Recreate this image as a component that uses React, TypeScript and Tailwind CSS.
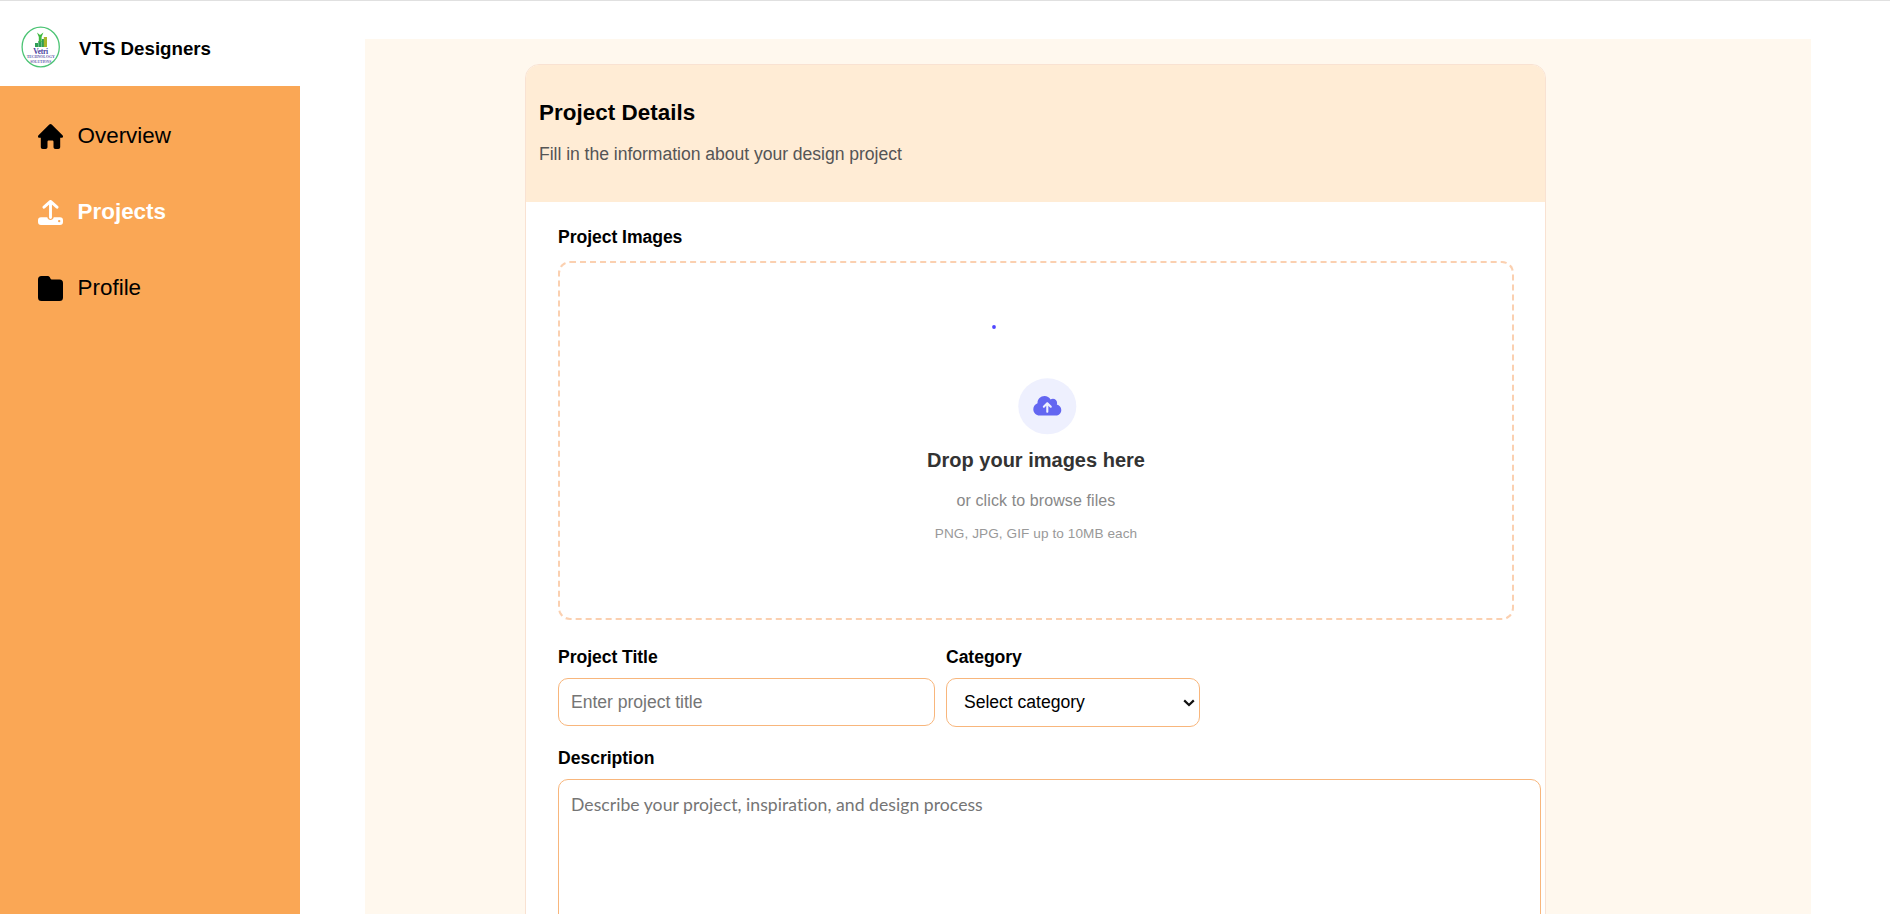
import React from "react";

const font = "font-['Liberation_Sans',Arial,sans-serif]";

function Logo() {
  return (
    <svg width="40" height="42" viewBox="0 0 40 42" className="shrink-0">
      <ellipse cx="19.7" cy="21" rx="18.600" ry="19.800" fill="#fff" stroke="#4cc474" strokeWidth="1.300" />
      <path d="M14 17h3v4h-3zM17.300 15h3.200v6h-3.200zM20.800 13h2.200v8h-2.200z" fill="#2f9e56" />
      <path d="M22.800 11h3.200v10h-3.200z" fill="#a8b52a" />
      <path d="M16 6.500l3 2.600 3.400-2.600-1.800 4.500v5h-2.800v-5z" fill="#3fb83f" />
      <text x="19.700" y="28" textAnchor="middle" fontSize="7.500" textLength="15" fontWeight="700" fontFamily="Liberation Serif, serif" fill="#4a3fa0">Vetri</text>
      <text x="19.700" y="32.300" textAnchor="middle" fontSize="4.500" textLength="28" lengthAdjust="spacingAndGlyphs" fontWeight="700" fontFamily="Liberation Serif, serif" fill="#6257a8">TECHNOLOGY</text>
      <text x="19.700" y="37" textAnchor="middle" fontSize="4.500" textLength="21" lengthAdjust="spacingAndGlyphs" fontWeight="700" fontFamily="Liberation Serif, serif" fill="#6257a8">SOLUTIONS</text>
    </svg>
  );
}

function HomeIcon() {
  return (
    <svg width="25" height="25" viewBox="0 0 25 25" fill="currentColor">
      <path d="M11.300.600a1.700 1.700 0 0 1 2.400 0L24.500 11.300c1 1 .5 2.500-.9 2.500H22.200V23c0 1.300-.7 2-2 2h-2.700c-1.300 0-2-.7-2-2v-5c0-.9-.5-1.400-1.400-1.400h-3.200c-.9 0-1.400.5-1.400 1.400V23c0 1.300-.7 2-2 2H4.800c-1.300 0-2-.7-2-2v-9.200H1.400c-1.400 0-1.900-1.500-.9-2.500z" />
    </svg>
  );
}

function UploadIcon() {
  return (
    <svg width="25" height="25" viewBox="0 0 25 25" fill="currentColor">
      <path d="M6 7.200l6.500-5.800L19 7.200M12.500 2.200v15.300" fill="none" stroke="currentColor" strokeWidth="2.900" strokeLinecap="round" strokeLinejoin="round" />
      <path fillRule="evenodd" d="M3 17.200h6.300c.4 1.700 1.600 2.800 3.200 2.800s2.800-1.100 3.200-2.800H22a3 3 0 0 1 3 3V22a3 3 0 0 1-3 3H3a3 3 0 0 1-3-3v-1.800a3 3 0 0 1 3-3zM21.200 19.900a1.200 1.200 0 1 0 0 2.400 1.200 1.200 0 0 0 0-2.400z" />
    </svg>
  );
}

function FolderIcon() {
  return (
    <svg width="25" height="25" viewBox="0 0 25 25" fill="currentColor">
      <path d="M3.500 0h5.800c1.400 0 2.300.6 2.900 1.900.5 1.100 1 1.500 2.200 1.500h7.100A3.500 3.500 0 0 1 25 6.900v14.600a3.500 3.500 0 0 1-3.500 3.500h-18A3.500 3.500 0 0 1 0 21.500v-18A3.500 3.500 0 0 1 3.500 0z" />
    </svg>
  );
}

function CloudPicture() {
  return (
    <svg width="104" height="120" viewBox="0 0 104 120">
      <circle cx="10" cy="7" r="1.900" fill="#4f46ff" />
      <ellipse cx="63.300" cy="86.300" rx="29" ry="28" fill="#eef0fe" />
      <path
        transform="translate(49.3 74.5) scale(0.04375)"
        fill="#6366f1"
        d="M144 480C64.500 480 0 415.500 0 336c0-62.800 40.200-116.200 96.200-135.900c-.1-2.700-.2-5.400-.2-8.100c0-88.400 71.600-160 160-160c59.300 0 111 32.200 138.700 80.200C409.900 102 428.300 96 448 96c53 0 96 43 96 96c0 12.200-2.300 23.800-6.400 34.600C596 238.400 640 290.100 640 352c0 70.700-57.300 128-128 128H144zm79-217c-9.400 9.400-9.400 24.600 0 33.900s24.600 9.400 33.900 0l39-39V392c0 13.300 10.700 24 24 24s24-10.700 24-24V257.900l39 39c9.400 9.400 24.600 9.400 33.900 0s9.400-24.600 0-33.900l-80-80c-9.400-9.400-24.600-9.400-33.900 0l-80 80z"
      />
    </svg>
  );
}

const navItems = [
  { label: "Overview", icon: <HomeIcon />, active: false },
  { label: "Projects", icon: <UploadIcon />, active: true },
  { label: "Profile", icon: <FolderIcon />, active: false },
];

function Sidebar() {
  return (
    <aside className="flex w-[300px] shrink-0 flex-col">
      <div className="flex h-[85px] items-center gap-[18px] pt-[7px] pl-[21px]">
        <Logo />
        <h3 className="pt-[4px] text-[18.72px] font-bold text-black">VTS Designers</h3>
      </div>
      <nav className="flex grow flex-col gap-[51px] bg-[#faa755] pt-[38px] pl-[38px]">
        {navItems.map((item) => (
          <a
            key={item.label}
            className={
              item.active
                ? "flex h-[25px] items-center gap-[14.6px] text-[22.4px] font-bold text-white"
                : "flex h-[25px] items-center gap-[14.6px] text-[22.4px] text-black"
            }
          >
            {item.icon}
            <span className="pb-[2px]">{item.label}</span>
          </a>
        ))}
      </nav>
    </aside>
  );
}

export default function App() {
  return (
    <div className={`flex h-[914px] w-[1890px] overflow-hidden border-t border-[#e0e0e0] bg-white ${font}`}>
      <Sidebar />
      <main className="mt-[38px] ml-[65px] w-[1446px] overflow-hidden bg-[#fff8ee] pt-[25px] pl-[160px]">
        <section className="h-[1100px] w-[1021px] overflow-hidden rounded-[14px] border border-[#f9e2d2] bg-white">
          <header className="h-[137px] bg-[#ffecd5] pt-[34px] pl-[13px]">
            <h2 className="text-[22.4px] leading-[28px] font-bold tracking-[0.04px] text-black">Project Details</h2>
            <p className="mt-[16px] text-[17.6px] leading-[22px] tracking-[-0.04px] text-[#555]">Fill in the information about your design project</p>
          </header>
          <div className="flex flex-col pt-[24px] pl-[32px]">
            <label className="text-[17.6px] leading-[22px] font-bold tracking-[-0.06px] text-black">Project Images</label>
            <div className="mt-[13px] flex h-[359px] w-[956px] flex-col items-center rounded-[12px] border-2 border-dashed border-[#fbd0b0] pt-[57px]">
              <CloudPicture />
              <h3 className="mt-[8px] text-[20px] leading-[24px] font-bold text-[#333]">Drop your images here</h3>
              <p className="mt-[19px] text-[16px] leading-[20px] tracking-[0.1px] text-[#888]">or click to browse files</p>
              <p className="mt-[14px] text-[13.6px] leading-[18px] tracking-[0.08px] text-[#999]">PNG, JPG, GIF up to 10MB each</p>
            </div>
            <div className="mt-[26px] flex items-start gap-[11px]">
              <div className="flex w-[377px] flex-col gap-[10px]">
                <label className="text-[17.6px] leading-[22px] font-bold tracking-[-0.06px] text-black">Project Title</label>
                <input
                  type="text"
                  placeholder="Enter project title"
                  className="h-[48px] rounded-[10px] border border-[#f8b67c] bg-white px-[12px] text-[17.6px] tracking-[-0.03px] placeholder:text-[#757575]"
                />
              </div>
              <div className="flex w-[254px] flex-col gap-[10px]">
                <label className="text-[17.6px] leading-[22px] font-bold tracking-[-0.06px] text-black">Category</label>
                <div className="relative">
                  <select className="h-[49px] w-full appearance-none rounded-[10px] border border-[#f8b67c] bg-white pl-[17px] text-[17.6px] tracking-[-0.03px] text-black">
                    <option>Select category</option>
                  </select>
                  <svg width="12" height="8" viewBox="0 0 12 8" className="pointer-events-none absolute top-[21px] right-[5px]">
                    <path d="M1.200 1.400L6 6l4.800-4.600" fill="none" stroke="#111" strokeWidth="2.200" />
                  </svg>
                </div>
              </div>
            </div>
            <label className="mt-[20px] text-[17.6px] leading-[22px] font-bold tracking-[-0.04px] text-black">Description</label>
            <textarea
              placeholder="Describe your project, inspiration, and design process"
              className="mt-[10px] h-[200px] w-[983px] resize-none rounded-[10px] border border-[#f8b67c] bg-white px-[12px] pt-[13px] font-[Lato,sans-serif] text-[17.6px] leading-[24px] tracking-[0.04px] placeholder:text-[#757575]"
            />
          </div>
        </section>
      </main>
    </div>
  );
}
